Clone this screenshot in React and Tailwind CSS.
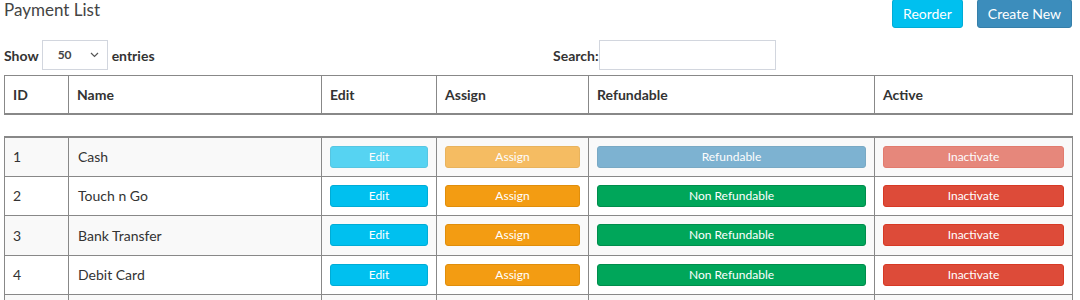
import React from "react";

const rows = [
  { id: 1, name: "Cash", refundable: true, disabled: true },
  { id: 2, name: "Touch n Go", refundable: false },
  { id: 3, name: "Bank Transfer", refundable: false },
  { id: 4, name: "Debit Card", refundable: false },
];

function Cols() {
  return (
    <colgroup>
      <col className="w-[64px]" />
      <col className="w-[253px]" />
      <col className="w-[115px]" />
      <col className="w-[152px]" />
      <col className="w-[286px]" />
      <col className="w-[198px]" />
    </colgroup>
  );
}

function Btn({ className, children }) {
  return (
    <button
      className={
        "block w-full h-[22px] rounded-[3px] border text-[12px] leading-none text-white " +
        className
      }
    >
      {children}
    </button>
  );
}

export default function App() {
  return (
    <div
      className="bg-white text-[#333] pl-[4px] pr-[8px] h-[300px] overflow-hidden"
      style={{ fontFamily: "Lato, 'Liberation Sans', sans-serif" }}
    >
      {/* title + actions */}
      <div className="flex items-start justify-between">
        <h1 className="text-[17px] leading-[20px] text-[#444] font-normal">Payment List</h1>
        <div className="flex gap-[14px] -mt-[1px]">
          <button className="h-[29px] px-[10px] rounded-[3px] bg-[#00c0ef] border border-[#00acd6] text-white text-[14px]">
            Reorder
          </button>
          <button className="h-[29px] px-[10px] rounded-[3px] bg-[#3c8dbc] border border-[#367fa9] text-white text-[14px]">
            Create New
          </button>
        </div>
      </div>

      {/* show / search */}
      <div className="flex items-center mt-[12px] h-[30px]">
        <div className="flex items-center w-[549px]">
          <span className="text-[14px] font-bold">Show</span>
          <div className="ml-[3px] w-[66px] h-[30px] border border-[#d2d6de] flex items-center justify-between pl-[15px] pr-[8px]">
            <span className="text-[12px] font-bold text-[#444]">50</span>
            <svg width="9" height="6" viewBox="0 0 9 6" fill="none" stroke="#555" strokeWidth="1.2">
              <path d="M1 1l3.5 3.5L8 1" />
            </svg>
          </div>
          <span className="ml-[4px] text-[14px] font-bold">entries</span>
        </div>
        <span className="text-[14px] font-bold">Search:</span>
        <input className="w-[177px] h-[30px] border border-[#d2d6de] outline-none" />
      </div>

      {/* header table */}
      <table className="mt-[5px] table-fixed border-collapse w-[1069px] text-[14px]">
        <Cols />
        <thead>
          <tr className="h-[38px]">
            {["ID", "Name", "Edit", "Assign", "Refundable", "Active"].map((h) => (
              <th
                key={h}
                className="border border-[#888] border-b-2 text-left font-bold px-[8px]"
              >
                {h}
              </th>
            ))}
          </tr>
        </thead>
      </table>

      {/* body table */}
      <table className="mt-[21px] table-fixed border-collapse w-[1069px] text-[14px]">
        <Cols />
        <tbody>
          {rows.map((r, i) => (
            <tr
              key={r.id}
              className={(i % 2 === 0 ? "bg-[#f9f9f9] " : "bg-white ") + "h-[39.5px]"}
            >
              <td className={"border border-[#888] px-[8px] " + (i === 0 ? "border-t-2" : "")}>{r.id}</td>
              <td className={"border border-[#888] px-[9px] " + (i === 0 ? "border-t-2" : "")}>{r.name}</td>
              <td className={"border border-[#888] px-[8px] " + (i === 0 ? "border-t-2" : "")}>
                <Btn className={"bg-[#00c0ef] border-[#00acd6] " + (r.disabled ? "opacity-65" : "")}>Edit</Btn>
              </td>
              <td className={"border border-[#888] px-[8px] " + (i === 0 ? "border-t-2" : "")}>
                <Btn className={"bg-[#f39c12] border-[#e08e0b] " + (r.disabled ? "opacity-65" : "")}>Assign</Btn>
              </td>
              <td className={"border border-[#888] px-[8px] " + (i === 0 ? "border-t-2" : "")}>
                {r.refundable ? (
                  <Btn className={"bg-[#3c8dbc] border-[#367fa9] " + (r.disabled ? "opacity-65" : "")}>Refundable</Btn>
                ) : (
                  <Btn className="bg-[#00a65a] border-[#008d4c]">Non Refundable</Btn>
                )}
              </td>
              <td className={"border border-[#888] px-[8px] " + (i === 0 ? "border-t-2" : "")}>
                <Btn className={"bg-[#dd4b39] border-[#d73925] " + (r.disabled ? "opacity-65" : "")}>Inactivate</Btn>
              </td>
            </tr>
          ))}
          {/* next row, only its top shows */}
          <tr className="bg-[#f9f9f9] h-[39.5px]">
            {[0, 1, 2, 3, 4, 5].map((k) => (
              <td key={k} className="border border-[#888]" />
            ))}
          </tr>
        </tbody>
      </table>
    </div>
  );
}
